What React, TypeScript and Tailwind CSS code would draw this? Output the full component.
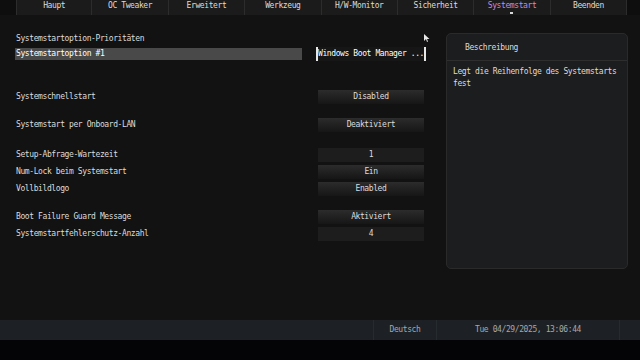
import React from 'react';

const tabs = ['Haupt', 'OC Tweaker', 'Erweitert', 'Werkzeug', 'H/W-Monitor', 'Sicherheit', 'Systemstart', 'Beenden'];

type Row = { label: string; value: string; mt: string; flat?: boolean };

const rows: Row[] = [
  { label: 'Systemschnellstart', value: 'Disabled', mt: 'mt-[29px]' },
  { label: 'Systemstart per Onboard-LAN', value: 'Deaktiviert', mt: 'mt-[14px]' },
  { label: 'Setup-Abfrage-Wartezeit', value: '1', mt: 'mt-[16px]', flat: true },
  { label: 'Num-Lock beim Systemstart', value: 'Ein', mt: 'mt-[3px]' },
  { label: 'Vollbildlogo', value: 'Enabled', mt: 'mt-[3px]' },
  { label: 'Boot Failure Guard Message', value: 'Aktiviert', mt: 'mt-[14px]' },
  { label: 'Systemstartfehlerschutz-Anzahl', value: '4', mt: 'mt-[3px]', flat: true },
];

const font = "font-['DejaVu_Sans_Mono','Liberation_Mono',monospace] text-[8px] tracking-[-0.4px]";

export default function App() {
  return (
    <div className={`w-[640px] h-[360px] flex flex-col bg-[#121212] text-[#dcdcdc] overflow-hidden ${font}`}>
      {/* Tabs */}
      <div className="flex h-[15px] bg-[#0e0e0e] pl-[16px]">
        {tabs.map((t, i) => (
          <div
            key={t}
            className={`relative w-[76.4px] h-[15px] flex justify-center pt-[1px] leading-[10px] bg-[#1b1b1b] border-r border-[#2c2c2c] ${i === 0 ? 'border-l' : ''} ${t === 'Systemstart' ? 'text-[#c68ae0]' : ''}`}
          >
            {t}
            {t === 'Systemstart' && (
              <span className="absolute left-[36px] top-[12px] w-[3px] h-[2px] bg-[#d8d8d8]" />
            )}
          </div>
        ))}
      </div>

      {/* Main */}
      <div className="flex-1 flex">
        <div className="w-[430px] flex flex-col pl-[15px] pt-[17px]">
          <div className="h-[14px] flex items-center pl-[1px]">Systemstartoption-Prioritäten</div>
          <div className="mt-[1px] h-[14px] flex items-center">
            <div className="w-[287px] h-[12px] bg-[#494949] flex items-center pl-[1px] text-white">Systemstartoption #1</div>
            <div className="ml-[14px] w-[110px] h-[14px] flex items-center justify-center border-x-2 border-[#e8e8e8] bg-[#161616] text-white">
              Windows Boot Manager ...
            </div>
          </div>
          {rows.map((r) => (
            <div key={r.label} className={`${r.mt} h-[14px] flex items-center`}>
              <div className="w-[303px] pl-[1px]">{r.label}</div>
              <div
                className={`w-[106px] h-[14px] flex items-center justify-center ${
                  r.flat ? 'bg-[#1d1d1d]' : 'bg-gradient-to-b from-[#2c2c2c] to-[#161616]'
                }`}
              >
                {r.value}
              </div>
            </div>
          ))}
        </div>

        <div className="relative flex-1 pt-[18px] pl-[16px]">
          {/* mouse cursor */}
          <svg className="absolute left-[-6px] top-[19px]" width="6" height="8" viewBox="0 0 6 8">
            <polygon points="0,0 0,7 2,5 3,8 4,7.5 3,5 5.5,5" fill="#e8e8e8" />
          </svg>
          <div className="w-[182px] h-[236px] rounded-[5px] border border-[#2a2a2a] bg-[#1c1d1f] flex flex-col">
            <div className="h-[27px] border-b border-[#2e2e2e] flex items-center pl-[18px] pt-[1px]">Beschreibung</div>
            <div className="px-[6px] pt-[5px] leading-[12px]">
              Legt die Reihenfolge des Systemstarts
              <br />
              fest
            </div>
          </div>
        </div>
      </div>

      {/* Status bar */}
      <div className="h-[20px] flex bg-[#1d2125] text-[#a6a8aa]">
        <div className="w-[373px]" />
        <div className="w-[64px] flex items-center justify-center border-x border-[#262b30]">Deutsch</div>
        <div className="w-[183px] flex items-center justify-center border-r border-[#262b30]">Tue 04/29/2025, 13:06:44</div>
        <div className="flex-1" />
      </div>
      <div className="h-[20px] bg-[#040407]" />
    </div>
  );
}
